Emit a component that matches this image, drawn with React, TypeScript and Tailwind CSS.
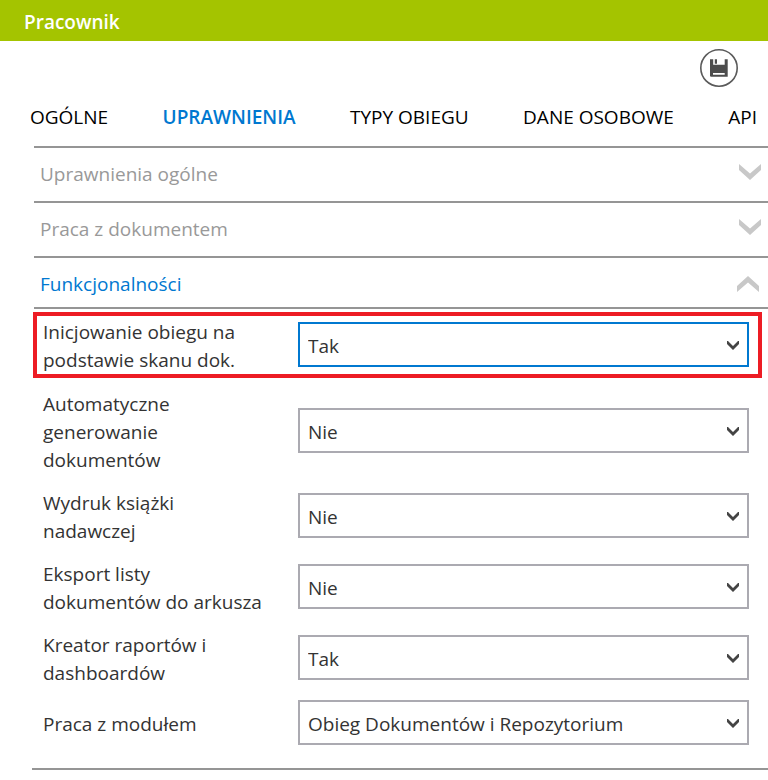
import React, { useState } from 'react';

type Field = {
  id: string;
  label: string;
  value: string;
  options: string[];
  highlighted?: boolean;
};

const tabs = ['OGÓLNE', 'UPRAWNIENIA', 'TYPY OBIEGU', 'DANE OSOBOWE', 'API'];

const yesNo = ['Tak', 'Nie'];

const fields: Field[] = [
  { id: 'scan', label: 'Inicjowanie obiegu na podstawie skanu dok.', value: 'Tak', options: yesNo, highlighted: true },
  { id: 'generate', label: 'Automatyczne generowanie dokumentów', value: 'Nie', options: yesNo },
  { id: 'print', label: 'Wydruk książki nadawczej', value: 'Nie', options: yesNo },
  { id: 'export', label: 'Eksport listy dokumentów do arkusza', value: 'Nie', options: yesNo },
  { id: 'reports', label: 'Kreator raportów i dashboardów', value: 'Tak', options: yesNo },
  {
    id: 'module',
    label: 'Praca z modułem',
    value: 'Obieg Dokumentów i Repozytorium',
    options: ['Obieg Dokumentów i Repozytorium', 'Obieg Dokumentów', 'Repozytorium'],
  },
];

function SaveIcon() {
  return (
    <svg width="38" height="38" viewBox="0 0 38 38" aria-hidden="true">
      <circle cx="19" cy="19" r="18.2" fill="none" stroke="#5a5a5a" strokeWidth="1.6" />
      <path
        fill="#4d4d4d"
        fillRule="evenodd"
        d="M10 10.3h3.2v5.4h11.5v-5.4h3v17.5H10.8l-.8-.8zM14.8 10.3h2.2v4.4h-2.2zM13 24v1.8h11.7V24z"
      />
    </svg>
  );
}

function SectionChevron({ open }: { open?: boolean }) {
  return (
    <svg width="22" height="16" viewBox="0 0 22 16" fill="#c8c8c8" aria-hidden="true">
      {open ? <path d="M0 16V10L11 0l11 10v6L11 6.5z" /> : <path d="M0 0v6l11 10L22 6V0L11 9.5z" />}
    </svg>
  );
}

function FieldRow({ field }: { field: Field }) {
  const [value, setValue] = useState(field.value);

  return (
    <div
      className={
        field.highlighted
          ? 'ml-[33px] mr-[6px] mt-[3px] mb-3 flex items-center border-4 border-[#ed1c24] pt-[2px] pl-[6px] pr-[9px]'
          : 'flex items-center pl-[43px] pr-[19px]'
      }
    >
      <div className="w-[255px] shrink-0 pr-8">
        <label htmlFor={field.id} className="block leading-7">
          {field.label}
        </label>
      </div>
      <div className="relative mb-[3px] flex-1">
        <select
          id={field.id}
          value={value}
          onChange={e => setValue(e.target.value)}
          className={
            field.highlighted
              ? 'block h-[45px] w-full appearance-none border-2 border-[#0078d0] bg-white pl-2 pr-8 pt-[3px] outline-none'
              : 'block h-[45px] w-full appearance-none border-2 border-[#abaab1] bg-white pl-2 pr-8 pt-[3px] outline-none'
          }
        >
          {field.options.map(o => (
            <option key={o}>{o}</option>
          ))}
        </select>
        <svg
          className="pointer-events-none absolute right-[10px] top-[19px]"
          width="12"
          height="9"
          viewBox="0 0 12 9"
          fill="#444"
          aria-hidden="true"
        >
          <path d="M0 0v3l6 6 6-6V0h-1L6 5 1 0z" />
        </svg>
      </div>
    </div>
  );
}

export default function App() {
  const [activeTab, setActiveTab] = useState('UPRAWNIENIA');

  return (
    <div className="min-h-screen overflow-x-hidden bg-white font-['Open_Sans','Noto_Sans',sans-serif] text-[19px] text-[#333]">
      <header className="flex h-[41px] items-center bg-[#a4c400] pl-6 pt-[3px]">
        <h1 className="font-semibold text-white">Pracownik</h1>
      </header>

      <div className="flex justify-end pr-[30px] pt-2">
        <button type="button" aria-label="Zapisz">
          <SaveIcon />
        </button>
      </div>

      <nav className="flex justify-between pb-[15px] pl-[30px] pr-[11px] pt-4 leading-7">
        {tabs.map(tab => (
          <button
            key={tab}
            type="button"
            onClick={() => setActiveTab(tab)}
            className={tab === activeTab ? 'font-semibold text-[#0078d0]' : 'text-black'}
          >
            {tab}
          </button>
        ))}
      </nav>

      <main>
        {['Uprawnienia ogólne', 'Praca z dokumentem'].map(title => (
          <h2 key={title} className="ml-[34px] border-t-2 border-[#959595]">
            <button
              type="button"
              aria-expanded="false"
              className="flex h-[53px] w-full items-center justify-between pl-[6px] pr-[7px] text-[#999]"
            >
              <span>{title}</span>
              <span className="pb-[6px]">
                <SectionChevron />
              </span>
            </button>
          </h2>
        ))}

        <h2 className="ml-[34px] border-y-2 border-[#959595]">
          <button
            type="button"
            aria-expanded="true"
            className="flex h-[49px] w-full items-center justify-between pl-[6px] pr-[9px] pt-[3px] text-[#0078d0]"
          >
            <span>Funkcjonalności</span>
            <SectionChevron open />
          </button>
        </h2>

        <form>
          <FieldRow field={fields[0]} />
          <div className="flex flex-col gap-[15px]">
            {fields.slice(1, 5).map(field => (
              <FieldRow key={field.id} field={field} />
            ))}
          </div>
          <div className="mt-[13px]">
            <FieldRow field={fields[5]} />
          </div>
        </form>
        <div className="ml-8 mt-5 border-t-2 border-[#959595]" />
      </main>
    </div>
  );
}
